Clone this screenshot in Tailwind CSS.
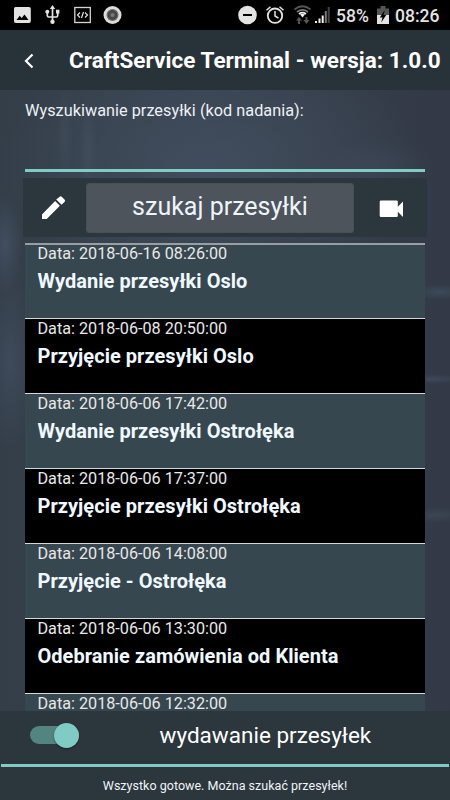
<!DOCTYPE html>
<html lang="pl">
<head>
<meta charset="utf-8">
<title>CraftService Terminal</title>
<script src="https://cdn.jsdelivr.net/npm/@tailwindcss/browser@4"></script>
</head>
<body class="bg-black">
<div class="w-[450px] h-[800px] flex flex-col overflow-hidden font-['Roboto','Noto_Sans',sans-serif] text-white whitespace-nowrap">

  <!-- Status bar -->
  <div class="h-[30px] shrink-0 bg-black flex items-center text-[#e3e3e3]">
    <svg class="w-[225px] h-[30px] shrink-0" viewBox="0 0 225 30" fill="none">
      <path fill="#e3e3e3" fill-rule="evenodd" d="M15.500 7h13.500a1.800 1.800 0 0 1 1.800 1.800v12.400a1.800 1.800 0 0 1-1.800 1.800H15.800a1.800 1.800 0 0 1-1.800-1.800V8.800a1.800 1.800 0 0 1 1.500-1.800zM16.500 20h12l-4-5.500-2.800 3.600-2-2.400z"/>
      <g stroke="#e3e3e3" stroke-width="1.700"><path d="M52.500 8v13M47.300 12v3.500q0 1.500 1.500 1.500h7.400q1.500 0 1.500-1.500V12"/></g>
      <path fill="#e3e3e3" d="M52.500 5l2.700 4h-5.400zM56 9.800h3.400v3.600H56z"/><circle cx="47.300" cy="11.700" r="2" fill="#e3e3e3"/><circle cx="52.500" cy="21.800" r="2.200" fill="#e3e3e3"/>
      <rect x="74.800" y="7.500" width="15.500" height="15" stroke="#d4d4d4" stroke-width="1.300"/>
      <path d="M80 12.500l-2.500 2.500 2.500 2.500M85 12.500l2.500 2.500-2.500 2.500M83.500 12l-2 6" stroke="#e3e3e3" stroke-width="1.200"/>
      <circle cx="112.500" cy="15" r="9" fill="#dcdcdc"/><circle cx="112.500" cy="15" r="6" fill="#6e6e6e"/><circle cx="112.500" cy="15" r="4.300" fill="#4a4a4a" stroke="#333" stroke-width=".8"/><circle cx="112.500" cy="15" r="2" fill="#777"/>
    </svg>
    <svg class="w-[111px] h-[30px] shrink-0" viewBox="225 0 111 30" fill="none">
      <circle cx="247.500" cy="15" r="9.300" fill="#e3e3e3"/><path d="M243 15h9" stroke="#000" stroke-width="2"/>
      <circle cx="275" cy="15.700" r="7.200" stroke="#e3e3e3" stroke-width="1.800"/><path d="M275 11v5l3.500 2.200M266.500 10.300l4-3.600M283.500 10.300l-4-3.600" stroke="#e3e3e3" stroke-width="1.500"/>
      <g stroke-width="1.700"><path d="M294.500 9.500q8-6.500 16 0" stroke="#555"/><path d="M297 12q5.500-4.400 11 0" stroke="#777"/><path d="M299 14q3.500-2.600 7 0" stroke="#eee"/></g>
      <path d="M300 14.500q2.500-1.500 5 0l-2.500 3z" fill="#eee"/>
      <path d="M296 20.500l3-3.500 3 3.500h-2V24h-2v-3.500zM303.500 20h2v-3h2v3h2l-3 4z" fill="#555"/>
      <path d="M316 23v-2M319.500 23v-4.500M322.700 23v-7.500" stroke="#eee" stroke-width="2"/><path d="M325.800 23V11" stroke="#777" stroke-width="2"/><path d="M328.700 23V7" stroke="#444" stroke-width="2"/>
    </svg>
    <span class="w-[41px] text-[17.500px] font-medium leading-[30px] pt-[2px]">58%</span>
    <svg class="w-[18px] h-[30px] shrink-0" viewBox="377 0 18 30"><path fill="#555" d="M380.500 6h5v2.500h3.500V15h-12V8.500h3.500z"/><path fill="#e3e3e3" d="M377 15h12v9h-12z"/><path fill="#000" d="M384.800 10l-5 7.500h2.700l-1.300 5 5-7.500h-2.700z"/></svg>
    <span class="text-[17.500px] font-medium leading-[30px] pt-[2px]">08:26</span>
  </div>

  <!-- Title bar -->
  <header class="h-[60px] shrink-0 bg-[#283339] flex items-center">
    <svg class="w-[69px] h-[60px] shrink-0" viewBox="0 0 69 60" fill="none"><path d="M32.500 24.500L26 31l6.500 6.500" stroke="#fff" stroke-width="2.200"/></svg>
    <h1 class="text-[22.500px] tracking-[0.035px] font-bold leading-[60px]">CraftService Terminal - wersja: 1.0.0</h1>
  </header>

  <!-- Content -->
  <main class="h-[621px] shrink-0 px-[25px] flex flex-col overflow-hidden bg-[radial-gradient(ellipse_8px_50px_at_65px_45px,#414d5c99,transparent),radial-gradient(ellipse_9px_50px_at_88px_60px,#45516199,transparent),radial-gradient(ellipse_210px_130px_at_210px_75px,#414d5e,transparent),radial-gradient(ellipse_60px_25px_at_375px_75px,#3d495799,transparent),radial-gradient(ellipse_18px_50px_at_5px_155px,#414e60,transparent),radial-gradient(ellipse_25px_90px_at_10px_270px,#3e4a5b,transparent),radial-gradient(ellipse_30px_8px_at_440px_202px,#3c4a58,transparent),radial-gradient(ellipse_35px_5px_at_430px_289px,#3c4a59,transparent),radial-gradient(ellipse_35px_8px_at_435px_425px,#3a4653,transparent),linear-gradient(90deg,#343e49,#38434f_45%,#333946)]">
    <label class="h-[79px] shrink-0 pt-[10px] text-[16.250px] tracking-[0.03px] leading-[22px] text-[#edf1f6]">Wyszukiwanie przesyłki (kod nadania):</label>
    <div class="h-[2.500px] shrink-0 bg-[#80cbc4]"></div>
    <div class="mt-[6.500px] -mx-[2px] h-[59px] shrink-0 bg-[#2b363d] flex items-center">
      <svg class="w-[63px] h-[59px] shrink-0" viewBox="23 178 63 59" fill="#fff"><path d="M42 214.500V219h4.700l13.200-13.200-4.800-4.800zM56.200 199.400l5.300 5.300 3-2.700q1.300-1.300 0-2.600l-2.500-2.500q-1.300-1.300-2.600 0z"/></svg>
      <button class="w-[268px] h-[50px] rounded-[3px] bg-[#4d545b] border border-[#485057] text-[25px] leading-[46px] pb-[2px] text-[#edf5fb]">szukaj przesyłki</button>
      <svg class="w-[73px] h-[59px] shrink-0" viewBox="354 178 73 59" fill="#fff"><path d="M381 200.500h15.500q1.300 0 1.300 1.300v5l5.200-5.300v15.500l-5.200-5.300v4q0 1.300-1.300 1.300H381q-1.300 0-1.300-1.300v-13.900q0-1.300 1.300-1.300z"/></svg>
    </div>
    <ul class="mt-[6px] border-t-2 border-[#999fa1] bg-[#37474f]">
      <li class="h-[73px] px-[12.500px]"><p class="text-[16.200px] leading-[18px] text-[#e8e8e8]">Data: 2018-06-16 08:26:00</p><p class="mt-[5px] text-[20px] tracking-[0.035px] leading-[26px] font-bold text-[#f0f8ff]">Wydanie przesyłki Oslo</p></li>
      <li class="h-[75px] px-[12.500px] pt-px border-t border-[#d4d8da] bg-black"><p class="text-[16.200px] leading-[18px] text-[#e8e8e8]">Data: 2018-06-08 20:50:00</p><p class="mt-[5px] text-[20px] tracking-[0.035px] leading-[26px] font-bold text-[#f0f8ff]">Przyjęcie przesyłki Oslo</p></li>
      <li class="h-[75px] px-[12.500px] pt-px border-t border-[#d4d8da]"><p class="text-[16.200px] leading-[18px] text-[#e8e8e8]">Data: 2018-06-06 17:42:00</p><p class="mt-[5px] text-[20px] tracking-[0.035px] leading-[26px] font-bold text-[#f0f8ff]">Wydanie przesyłki Ostrołęka</p></li>
      <li class="h-[75px] px-[12.500px] pt-px border-t border-[#d4d8da] bg-black"><p class="text-[16.200px] leading-[18px] text-[#e8e8e8]">Data: 2018-06-06 17:37:00</p><p class="mt-[5px] text-[20px] tracking-[0.035px] leading-[26px] font-bold text-[#f0f8ff]">Przyjęcie przesyłki Ostrołęka</p></li>
      <li class="h-[75px] px-[12.500px] pt-px border-t border-[#d4d8da]"><p class="text-[16.200px] leading-[18px] text-[#e8e8e8]">Data: 2018-06-06 14:08:00</p><p class="mt-[5px] text-[20px] tracking-[0.035px] leading-[26px] font-bold text-[#f0f8ff]">Przyjęcie - Ostrołęka</p></li>
      <li class="h-[75px] px-[12.500px] pt-px border-t border-[#d4d8da] bg-black"><p class="text-[16.200px] leading-[18px] text-[#e8e8e8]">Data: 2018-06-06 13:30:00</p><p class="mt-[5px] text-[20px] tracking-[0.035px] leading-[26px] font-bold text-[#f0f8ff]">Odebranie zamówienia od Klienta</p></li>
      <li class="h-[75px] px-[12.500px] pt-px border-t border-[#d4d8da]"><p class="text-[16.200px] leading-[18px] text-[#e8e8e8]">Data: 2018-06-06 12:32:00</p></li>
    </ul>
  </main>

  <!-- Mode switch and status -->
  <footer class="h-[89px] shrink-0 bg-[#2b363d] flex flex-col">
    <div class="h-[53px] shrink-0 flex items-center">
      <div class="ml-[30px] w-[49px] h-[18px] -mt-[5px] rounded-full bg-[#548480] flex items-center justify-end">
        <div class="w-[25px] h-[25px] shrink-0 rounded-full bg-[#80cbc4] shadow-[0_1px_2px_rgba(0,0,0,0.4)]"></div>
      </div>
      <span class="ml-[80.500px] -mt-[5px] text-[22.500px] leading-[30px]">wydawanie przesyłek</span>
    </div>
    <div class="mx-px h-[2.500px] shrink-0 bg-[#80cbc4]"></div>
    <p class="mt-[10px] text-center text-[12.500px] tracking-[0.02px] leading-[18px] text-[#f0f4f8]">Wszystko gotowe. Można szukać przesyłek!</p>
  </footer>
</div>
</body>
</html>
